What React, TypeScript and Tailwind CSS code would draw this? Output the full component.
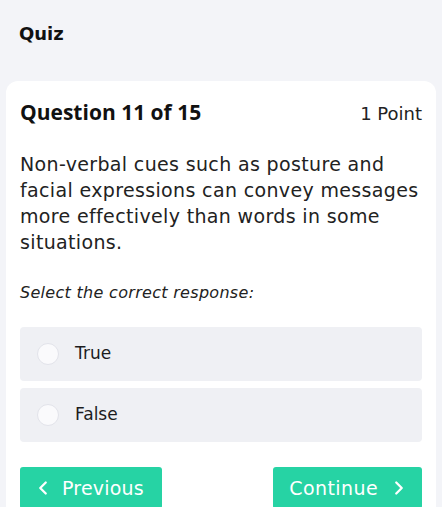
import { ChevronLeft, ChevronRight } from 'lucide-react';

const options = ['True', 'False'];

export default function App() {
  return (
    <div className="min-h-screen bg-[#f3f4f8] font-['DejaVu_Sans',sans-serif] text-[#1c1c1e]">
      <div className="px-[19px] pt-[22px] pb-[35px]">
        <h1 className="text-[18px] font-bold leading-[24px] text-[#111]">Quiz</h1>
      </div>

      <div className="mx-[6px] rounded-t-[12px] bg-white px-[14px] pt-[16px] pb-[20px]">
        <div className="flex items-baseline justify-between">
          <h2 className="font-['Open_Sans',sans-serif] text-[21px] font-bold leading-[30px] text-[#111]">
            Question 11 of 15
          </h2>
          <span className="text-[18px] leading-[30px] text-[#222]">1 Point</span>
        </div>

        <p className="mt-[22px] text-[19px] leading-[26px] tracking-[0.35px] text-[#222]">
          Non-verbal cues such as posture and facial expressions can convey messages more effectively than words in some situations.
        </p>

        <p className="mt-[26px] text-[16px] italic leading-[24px] tracking-[0.3px] text-[#222]">
          Select the correct response:
        </p>

        <div className="mt-[22px] flex flex-col gap-[7px]">
          {options.map((opt) => (
            <label
              key={opt}
              className="flex h-[54px] items-center gap-[16px] rounded-[4px] bg-[#eff0f4] pl-[17px]"
            >
              <span className="h-[22px] w-[22px] rounded-full border border-[#e2e3ea] bg-[#fafafc]" />
              <span className="text-[17px] font-medium text-[#1c1c1e]">{opt}</span>
            </label>
          ))}
        </div>

        <div className="mt-[25px] flex justify-between">
          <button className="flex h-[42px] w-[142px] items-center gap-[8px] rounded-[3px] bg-[#26d3a4] pl-[12px] text-[19px] tracking-[0.2px] text-white">
            <ChevronLeft size={22} strokeWidth={2.5} />
            Previous
          </button>
          <button className="flex h-[42px] w-[149px] items-center justify-end gap-[10px] rounded-[3px] bg-[#26d3a4] pr-[12px] text-[19px] tracking-[0.4px] text-white">
            Continue
            <ChevronRight size={22} strokeWidth={2.5} />
          </button>
        </div>
      </div>
    </div>
  );
}
